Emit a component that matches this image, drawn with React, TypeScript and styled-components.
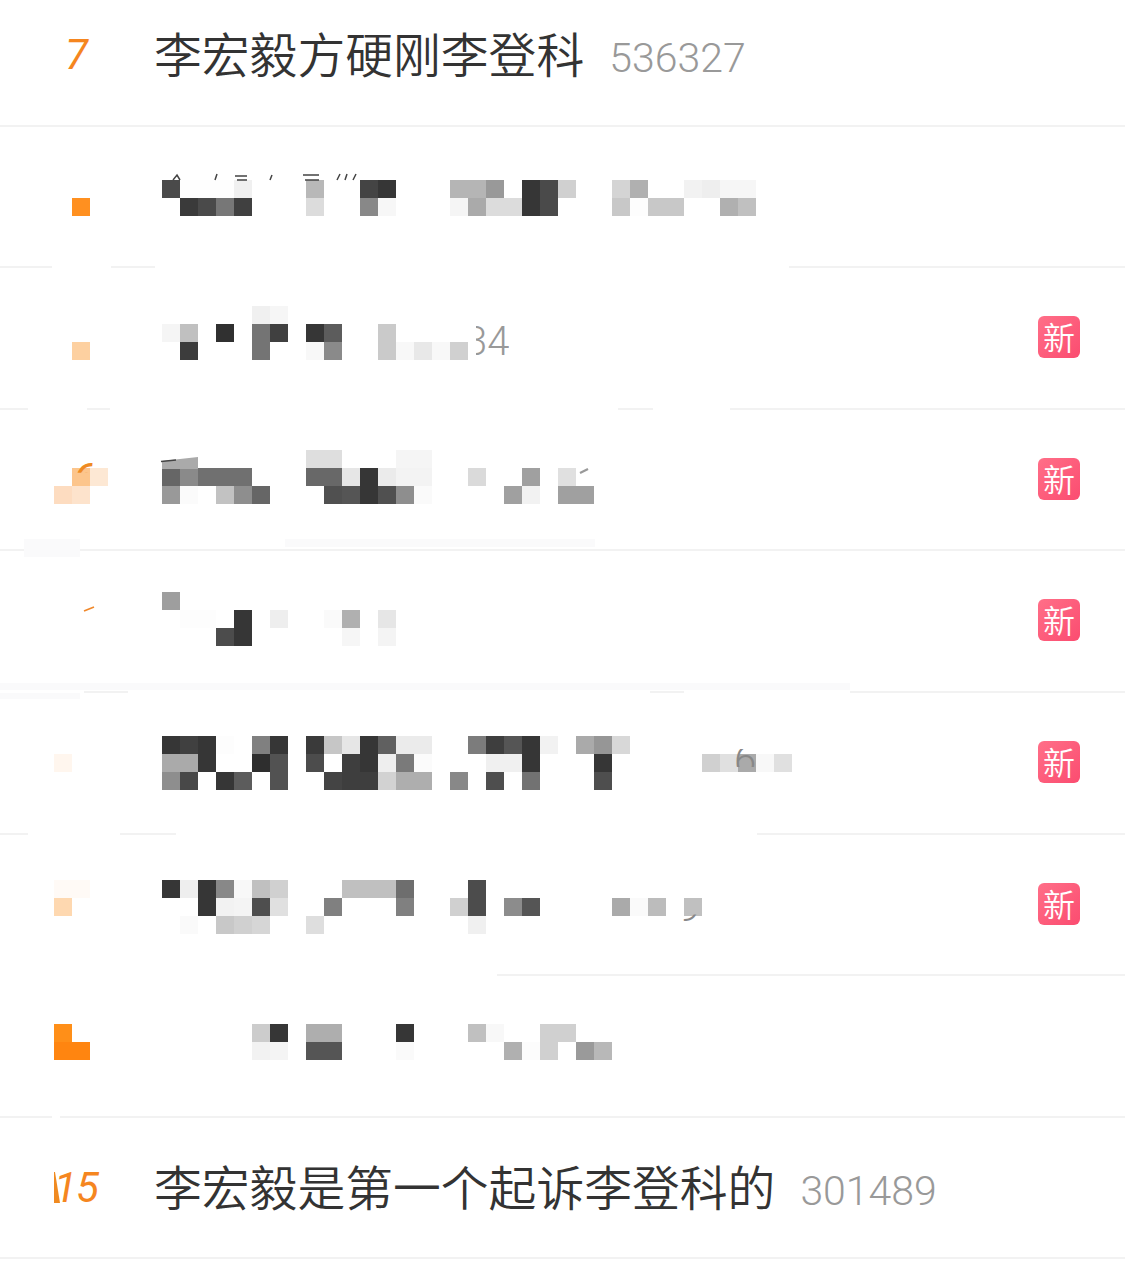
import React from "react";
import styled, { createGlobalStyle } from "styled-components";

const Global = createGlobalStyle`
  html, body { margin: 0; padding: 0; background: #fff; }
  body { overflow: hidden; font-family: "Noto Sans CJK SC", "Liberation Sans", sans-serif; }
`;

const Page = styled.main`
  width: 1125px;
  height: 1273px;
  overflow: hidden;
  background: #fff;
`;
const List = styled.ul`
  list-style: none;
  margin: -15px 0 0;
  padding: 0;
`;
const Item = styled.li`
  display: block;
`;
const Row = styled.div<{ $masked?: boolean }>`
  position: relative;
  height: 139.6px;
  display: flex;
  align-items: ${(p) => (p.$masked ? "flex-start" : "center")};
  padding: 0 45px 0 54px;
  box-sizing: border-box;
`;
const RankSlot = styled.div<{ $wide?: boolean }>`
  width: ${(p) => (p.$wide ? 108 : 100)}px;
  flex: none;
  display: flex;
  justify-content: flex-start;
`;
const Rank = styled.span`
  width: 44px;
  text-align: center;
  font: italic 400 42px/1 Roboto, "Liberation Sans", sans-serif;
  letter-spacing: -1px;
  color: #f5861f;
`;
const Title = styled.span`
  font-size: 47.8px;
  font-weight: 350;
  line-height: 1;
  margin-top: -4px;
  color: #333;
  white-space: nowrap;
`;
const Count = styled.span`
  margin-left: 25px;
  margin-top: 8px;
  font: 300 41px/1 Roboto, "Liberation Sans", sans-serif;
  color: #999;
`;
const Badge = styled.span`
  position: absolute;
  right: 45px;
  top: 48px;
  width: 42px;
  height: 42px;
  border-radius: 6px;
  background: linear-gradient(135deg, #ff6f88, #fb4c70);
  color: #fff;
  font-size: 32px;
  font-weight: 350;
  line-height: 41px;
  text-align: center;
`;
const Mosaic = styled.div<{ $cols: number; $top: number }>`
  display: grid;
  flex: none;
  grid-template-columns: repeat(${(p) => p.$cols}, 18px);
  grid-auto-rows: 18px;
  margin-top: ${(p) => p.$top}px;
`;
const Cell = styled.i<{ $tone: string }>`
  display: block;
  background: ${(p) => p.$tone};
`;
const Fragment = styled.span<{ $left: number; $top: number; $clip: string; $tone: string }>`
  position: absolute;
  left: ${(p) => p.$left}px;
  top: ${(p) => p.$top}px;
  clip-path: inset(${(p) => p.$clip});
  color: ${(p) => p.$tone};
  font: 300 40px/1 Roboto, "Liberation Sans", sans-serif;
`;
const RankFragment = styled(Fragment)`
  font: italic 400 42px/1 Roboto, "Liberation Sans", sans-serif;
`;
const Scrap = styled.svg<{ $left: number; $top: number }>`
  position: absolute;
  left: ${(p) => p.$left}px;
  top: ${(p) => p.$top}px;
  overflow: visible;
`;
const Rule = styled.div<{ $segments: string }>`
  position: relative;
  height: 2px;
  background: ${(p) => p.$segments};
`;
const Smear = styled.div<{ $left: number; $width: number; $top: number; $height: number }>`
  position: absolute;
  left: ${(p) => p.$left}px;
  width: ${(p) => p.$width}px;
  top: ${(p) => p.$top}px;
  height: ${(p) => p.$height}px;
  background: #fafafb;
`;

const RULE = "#f2f2f2";
const ruleBg = (segs: [number, number][]) => {
  const stops: string[] = [];
  segs.forEach(([a, b]) => {
    stops.push(`transparent ${a}px`, `${RULE} ${a}px`, `${RULE} ${b}px`, `transparent ${b}px`);
  });
  return `linear-gradient(90deg, ${stops.join(", ")})`;
};

const tone = (t?: string) => {
  if (!t) return "transparent";
  return t.length === 2 ? `#${t}${t}${t}` : `#${t}`;
};

function Pixels({ rows, cols, top }: { rows: string[]; cols: number; top: number }) {
  const cells: React.ReactNode[] = [];
  rows.forEach((line, r) => {
    const map: Record<number, string> = {};
    line.split(" ").filter(Boolean).forEach((tok) => {
      const [c, v] = tok.split(":");
      map[Number(c)] = v;
    });
    for (let c = 0; c < cols; c++) cells.push(<Cell key={`${r}-${c}`} $tone={tone(map[c])} />);
  });
  return <Mosaic $cols={cols} $top={top}>{cells}</Mosaic>;
}

const New = () => <Badge>新</Badge>;

export default function App() {
  return (
    <Page>
      <Global />
      <List>
        <Item>
          <Row>
            <RankSlot><Rank>7</Rank></RankSlot>
            <Title>李宏毅方硬刚李登科</Title>
            <Count>536327</Count>
          </Row>
          <Rule $segments={RULE} />
        </Item>

        <Item>
          <Row $masked>
            <Pixels cols={6} top={53.4} rows={["", "1:ff9020"]} />
            <Pixels
              cols={33}
              top={53.4}
              rows={[
                "0:4a 1:fe 2:fe 3:fe 4:f0 8:b8 11:44 12:36 16:b5 17:b5 18:99 20:36 21:4a 22:d0 25:d4 26:b0 29:f2 30:ee 31:f6 32:f6",
                "1:3a 2:4a 3:77 4:40 8:dc 11:88 12:f7 16:f5 17:aa 18:dc 19:dc 20:36 21:4a 25:c8 26:fd 27:c8 28:c8 31:b0 32:c0",
              ]}
            />
            <Scrap $left={165} $top={46} width="220" height="8" viewBox="0 0 220 8">
              <path d="M8 7l4-5 3 5M50 7l2-6M70 3h12M72 7h10M105 7l2-5M138 2h16M140 7h14M172 7l3-6M180 7l2-6M188 7l3-6" stroke="#444" strokeWidth="1.5" fill="none" />
            </Scrap>
          </Row>
          <Rule $segments={ruleBg([[0, 52], [111, 155], [789, 1125]])} />
        </Item>

        <Item>
          <Row $masked>
            <Pixels cols={6} top={37.8} rows={["", "", "1:fdd0a0"]} />
            <Pixels
              cols={33}
              top={37.8}
              rows={[
                "5:f0 6:f6",
                "0:f5 1:c0 3:30 5:74 6:40 8:36 9:5c 12:ca",
                "1:3c 5:74 8:f8 9:8a 12:ca 13:f8 14:e8 15:f8 16:d0",
              ]}
            />
            <Fragment $left={465} $top={54} $clip="0 0 0 11px" $tone="#999">34</Fragment>
            <New />
          </Row>
          <Rule $segments={ruleBg([[0, 28], [87, 110], [618, 653], [730, 1125]])} />
        </Item>

        <Item>
          <Row $masked>
            <Pixels cols={6} top={40.2} rows={["", "1:fcc58c 2:fde8d4", "0:fddcc0 1:fde3cc"]} />
            <Pixels
              cols={33}
              top={40.2}
              rows={[
                "8:de 9:de 13:f5 14:f5",
                "0:66 1:8a 2:70 3:70 4:70 8:68 9:68 10:e6 11:36 12:eb 13:f3 14:f3 17:da 20:a0 22:e0",
                "0:99 1:fb 3:c2 4:8e 5:66 9:50 10:55 11:36 12:50 13:8e 14:fa 19:a0 20:f2 22:a0 23:a0",
              ]}
            />
            <RankFragment $left={73} $top={48} $clip="0 0 27px 0" $tone="#ef8a22">6</RankFragment>
            <Scrap $left={160} $top={47} width="38" height="12" viewBox="0 0 38 12">
              <path d="M2 4L38 0V12H2Z" fill="#aaa" />
              <path d="M1 4.5L16 3" stroke="#444" strokeWidth="1.5" />
            </Scrap>
            <Scrap $left={579} $top={58} width="10" height="6" viewBox="0 0 10 6">
              <path d="M1 5L9 1" stroke="#999" strokeWidth="2.2" />
            </Scrap>
            <New />
          </Row>
          <Rule $segments={RULE}>
            <Smear $left={24} $width={56} $top={-10} $height={18} />
            <Smear $left={285} $width={310} $top={-10} $height={8} />
          </Rule>
        </Item>

        <Item>
          <Row $masked>
            <Scrap $left={83} $top={55} width="12" height="6" viewBox="0 0 12 6">
              <path d="M1 5L11 1" stroke="#f0882a" strokeWidth="1.6" />
            </Scrap>
            <RankSlot $wide />
            <Pixels
              cols={33}
              top={40.6}
              rows={[
                "0:9e",
                "1:fd 2:fd 4:36 6:ee 9:fa 10:b0 12:e6",
                "3:4c 4:36 10:f6 12:f4",
              ]}
            />
            <New />
          </Row>
          <Rule $segments={ruleBg([[84, 128], [650, 684], [850, 1125]])}>
            <Smear $left={0} $width={850} $top={-8} $height={7} />
            <Smear $left={0} $width={80} $top={2} $height={6} />
          </Rule>
        </Item>

        <Item>
          <Row $masked>
            <Pixels cols={6} top={43} rows={["", "0:fff6ee"]} />
            <Pixels
              cols={35}
              top={43}
              rows={[
                "0:36 1:40 2:36 3:fd 5:80 6:36 8:3a 9:c6 10:e6 11:36 12:60 13:eb 14:eb 17:7c 18:3e 19:55 20:36 21:f2 23:aa 24:96 25:d8",
                "0:aa 1:aa 2:36 5:2e 6:52 8:4c 10:3e 11:36 12:ee 13:7a 14:fb 18:f0 19:f0 20:36 24:36 30:d0 31:e0 32:aa 33:f8 34:e0",
                "0:8e 1:48 3:36 4:5c 6:52 9:44 10:3e 11:3e 12:d2 13:ae 14:ae 16:88 18:4e 20:72 24:4e",
              ]}
            />
            <Fragment $left={734} $top={48} $clip="8px 0 14px 0" $tone="#888">6</Fragment>
            <New />
          </Row>
          <Rule $segments={ruleBg([[0, 28], [120, 176], [757, 1125]])} />
        </Item>

        <Item>
          <Row $masked>
            <Pixels cols={6} top={45.4} rows={["0:fffaf6 1:fffaf6", "0:fed8b0"]} />
            <Pixels
              cols={33}
              top={45.4}
              rows={[
                "0:36 1:ee 2:36 3:88 4:f8 5:c0 6:d0 10:c0 11:c0 12:c0 13:6e 17:4c",
                "2:36 3:f2 4:f4 5:4e 6:e0 9:80 13:80 16:d0 17:4c 19:8c 20:55 25:aa 26:fa 27:bc 29:c0",
                "1:fa 3:c8 4:d0 5:d6 8:de 17:f0",
              ]}
            />
            <Fragment $left={678} $top={53} $clip="27px 0 0 0" $tone="#888">9</Fragment>
            <New />
          </Row>
          <Rule $segments={ruleBg([[497, 1125]])} />
        </Item>

        <Item>
          <Row $masked>
            <Pixels cols={6} top={47.8} rows={["0:ff8f18", "0:ff8510 1:ff8510"]} />
            <Pixels
              cols={33}
              top={47.8}
              rows={[
                "5:cc 6:36 8:ae 9:ae 13:36 17:c0 18:f8 21:d0 22:d0",
                "5:f2 6:f4 8:55 9:55 13:fa 19:b0 20:fc 21:d0 23:9a 24:b8",
              ]}
            />
          </Row>
          <Rule $segments={ruleBg([[0, 52], [60, 1125]])} />
        </Item>

        <Item>
          <Row>
            <Scrap $left={54} $top={54} width="7" height="32" viewBox="0 0 7 32">
              <path d="M0 0L1 0L6 31H0Z" fill="#f08a20" />
            </Scrap>
            <RankSlot><Rank>15</Rank></RankSlot>
            <Title>李宏毅是第一个起诉李登科的</Title>
            <Count>301489</Count>
          </Row>
          <Rule $segments={RULE} />
        </Item>
      </List>
    </Page>
  );
}
